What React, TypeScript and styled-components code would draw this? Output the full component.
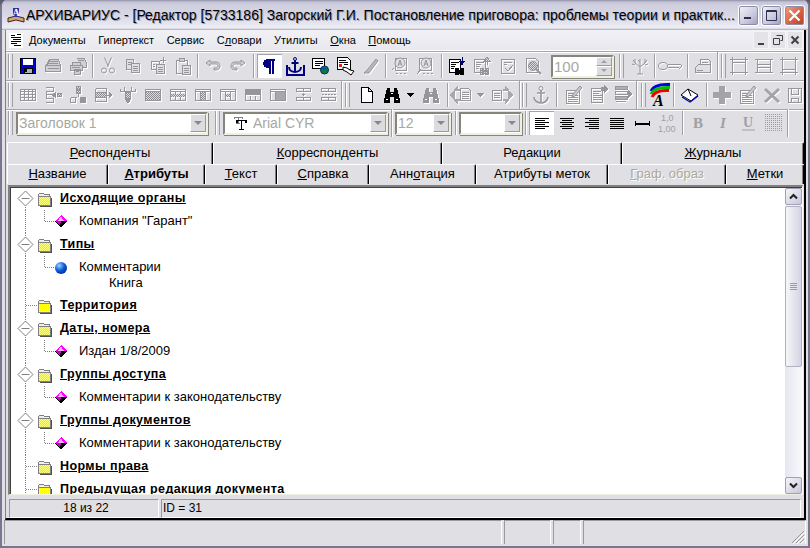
import * as React from 'react';
import styled, { createGlobalStyle } from 'styled-components';

const GlobalStyle = createGlobalStyle`
  html, body { margin: 0; padding: 0; background: #5c5c70; }
  body { width: 810px; height: 548px; overflow: hidden; font-family: "Liberation Sans", Arial, sans-serif; }
`;

const Win = styled.div`
  width: 810px;
  height: 548px;
  box-sizing: border-box;
  display: flex;
  flex-direction: column;
  background: #e0dfe3;
  border-radius: 7px 7px 0 0;
  border: 2px solid #77778f;
  border-top: 0;
  overflow: hidden;
`;

const TitleBar = styled.div`
  height: 30px;
  flex: none;
  margin: 0 -2px;
  display: flex;
  align-items: center;
  padding: 0 5px 0 7px;
  background: linear-gradient(#8e8ea6 0, #c4c4d6 2px, #cfcfdf 5px, #d6d6e4 14px, #e6e6f0 24px, #eeeef6 28px, #a6a6bc 30px);
`;

const TitleText = styled.div`
  flex: 1;
  min-width: 0;
  margin-left: 1px;
  margin-top: -1px;
  font: 14px "Liberation Sans", sans-serif;
  color: #000;
  text-shadow: 1px 1px 0 #9a9ab0;
  white-space: nowrap;
`;

const CaptionBtn = styled.div<{ $close?: boolean }>`
  width: 21px;
  height: 21px;
  flex: none;
  margin-left: 2px;
  box-sizing: border-box;
  border: 1px solid #fff;
  border-radius: 3px;
  display: flex;
  align-items: center;
  justify-content: center;
  background: ${p =>
    p.$close
      ? 'linear-gradient(135deg, #eda08c, #d85c3c 60%, #b83c2c)'
      : 'linear-gradient(135deg, #f4f4fa, #c8c8dc 60%, #9c9cc0)'};
  box-shadow: 0 0 0 1px #8c8ca4 inset;
`;

const Child = styled.div`
  flex: none;
  height: 490px;
  margin: 0 0 0 3px;
  box-sizing: border-box;
  width: 801px;
  border-left: 1px solid #808080;
  border-right: 2px solid #000;
  border-bottom: 2px solid #000;
  display: flex;
  flex-direction: column;
`;

const MenuBar = styled.div`
  height: 20px;
  flex: none;
  display: flex;
  align-items: center;
  background: linear-gradient(#f1f1f5, #e8e8ee);
  padding-left: 3px;
  font-size: 11px;
  color: #000;
  border-bottom: 1px solid #ffffff;
`;

const MenuItem = styled.span`
  margin-left: 12.5px;
  white-space: nowrap;
  &:first-of-type { margin-left: 6px; }
`;

const MdiButtons = styled.div`
  margin-left: auto;
  display: flex;
  margin-right: 1px;
`;

const MdiBtn = styled.div`
  width: 16px;
  height: 18px;
  margin-left: 1px;
  background: #e4e4e8;
  border: 1px solid #f4f4f6;
  box-sizing: border-box;
  display: flex;
  align-items: center;
  justify-content: center;
`;

const ToolRow = styled.div<{ $h: number }>`
  height: ${p => p.$h}px;
  box-sizing: border-box;
  flex: none;
  display: flex;
  align-items: center;
  padding-left: 2px;
  border-top: 1px solid #a4a4a8;
  box-shadow: inset 0 1px 0 #fff;
`;

const Grip = styled.div<{ $ml?: number; $mr?: number }>`
  width: 5px;
  height: 24px;
  flex: none;
  margin-left: ${p => p.$ml ?? 0}px;
  margin-right: ${p => p.$mr ?? 2}px;
  box-sizing: border-box;
  border-left: 1px solid #a0a0a4;
  border-right: 1px solid #a0a0a4;
  box-shadow: inset 1px 0 0 #fff;
`;

const Sep = styled.div<{ $w?: number }>`
  width: ${p => p.$w ?? 5}px;
  height: 24px;
  flex: none;
  display: flex;
  justify-content: center;
  &::after {
    content: '';
    width: 1px;
    background: #a0a0a4;
    box-shadow: 1px 0 0 #fff;
  }
`;

const BandEnd = styled(Sep)`
  height: 28px;
`;

const Tool = styled.div<{ $w?: number; $on?: boolean; $off?: boolean }>`
  width: ${p => p.$w ?? 25}px;
  height: 24px;
  flex: none;
  display: flex;
  align-items: center;
  justify-content: center;
  color: ${p => (p.$off ? '#96969a' : '#000')};
  background: ${p => (p.$on ? '#fff' : 'transparent')};
  box-shadow: ${p => (p.$on ? 'inset 1px 1px 0 #a4a4a8' : 'none')};
  svg { overflow: visible; filter: ${p => (p.$off ? 'drop-shadow(1px 1px 0 #fff)' : 'none')}; }
`;

const Combo = styled.div<{ $w: number; $ml?: number }>`
  width: ${p => p.$w}px;
  height: 23px;
  flex: none;
  margin-left: ${p => p.$ml ?? 0}px;
  box-sizing: border-box;
  background: #fff;
  border: 2px solid;
  border-color: #85857c #f1efe2 #f1efe2 #85857c;
  box-shadow: 1px 1px 0 #85857c;
  display: flex;
  align-items: center;
  color: #a8a8a0;
  font-size: 14px;
  padding-left: 1px;
  white-space: nowrap;
`;

const ComboText = styled.span`
  flex: 1;
  overflow: hidden;
`;

const ComboArrow = styled.div`
  width: 16px;
  height: 18px;
  flex: none;
  background: #dcdce0;
  border: 1px solid;
  border-color: #fff #9a9a9e #9a9a9e #fff;
  box-sizing: border-box;
  position: relative;
  &::after {
    content: '';
    position: absolute;
    left: 3px;
    top: 6px;
    border: 4px solid transparent;
    border-top: 4px solid #88888c;
    border-bottom: 0;
  }
`;

const Spin = styled(Combo)`
  font-size: 15px;
`;

const SpinButtons = styled.div`
  width: 16px;
  height: 19px;
  display: flex;
  flex-direction: column;
  flex: none;
`;

const SpinBtn = styled.div<{ $up?: boolean }>`
  flex: 1;
  background: #dcdce0;
  border: 1px solid;
  border-color: #fff #9a9a9e #9a9a9e #fff;
  display: flex;
  align-items: center;
  justify-content: center;
  &::after {
    content: '';
    border: 3px solid transparent;
    ${p => (p.$up ? 'border-bottom: 3px solid #a0a0a4; border-top: 0;' : 'border-top: 3px solid #a0a0a4; border-bottom: 0;')}
  }
`;

const TabRow = styled.div<{ $h: number; $mt?: number }>`
  display: flex;
  height: ${p => p.$h}px;
  flex: none;
  margin-top: ${p => p.$mt ?? 0}px;
  padding-left: 1px;
`;

const Tab = styled.div<{ $w: number; $active?: boolean; $off?: boolean }>`
  width: ${p => p.$w}px;
  flex: none;
  box-sizing: border-box;
  display: flex;
  align-items: center;
  justify-content: center;
  padding-bottom: 2px;
  background: #e0dfe3;
  border-top: 1px solid #fff;
  border-left: 1px solid #fff;
  border-right: 1px solid #000;
  box-shadow: inset -1px 0 0 #808080;
  border-radius: 2px 2px 0 0;
  font-size: 13px;
  font-weight: ${p => (p.$active ? 700 : 400)};
  color: ${p => (p.$off ? '#aca899' : '#000')};
  text-shadow: ${p => (p.$off ? '1px 1px 0 #fff' : 'none')};
  white-space: nowrap;
`;

const Panel = styled.div`
  flex: none;
  height: 310px;
  margin: 1px 1px 0 2px;
  box-sizing: border-box;
  border-top: 2px solid #808080;
  border-left: 2px solid #808080;
  box-shadow: inset 1px 1px 0 #404040;
  border-right: 1px solid #fff;
  border-bottom: 1px solid #f1efe2;
  background: #fff;
  display: flex;
`;

const TreePane = styled.div`
  flex: 1;
  min-width: 0;
  overflow: hidden;
  font-size: 13px;
  color: #000;
`;

const Row = styled.div<{ $h?: number }>`
  height: ${p => p.$h ?? 23}px;
  display: flex;
  align-items: flex-start;
`;

const Caption = styled.div`
  font-size: 12.5px;
  font-weight: 700;
  text-decoration: underline;
  line-height: 23px;
  margin-left: 8px;
  letter-spacing: 0.4px;
  white-space: nowrap;
`;

const Leaf = styled.div`
  margin-left: 11px;
  padding-top: 3px;
  line-height: 16px;
  white-space: nowrap;
`;

const SubLeaf = styled.div`
  margin-left: 30px;
`;

const Scrollbar = styled.div`
  width: 17px;
  flex: none;
  margin-top: 1px;
  display: flex;
  flex-direction: column;
  background: #f3f3f8;
`;

const ScrollBtn = styled.div`
  height: 17px;
  flex: none;
  box-sizing: border-box;
  border: 1px solid #a0a0b4;
  border-radius: 2px;
  background: linear-gradient(135deg, #f4f4f8, #c8c8dc);
  display: flex;
  align-items: center;
  justify-content: center;
`;

const Thumb = styled.div`
  height: 161px;
  flex: none;
  margin-top: 1px;
  box-sizing: border-box;
  border: 1px solid #b0b0c0;
  border-radius: 2px;
  background: linear-gradient(90deg, #f6f6fa, #d4d4e2);
  display: flex;
  flex-direction: column;
  align-items: center;
  justify-content: center;
  gap: 1px;
`;

const ThumbLine = styled.div`
  width: 7px;
  height: 1px;
  background: #9a9aa8;
`;

const Track = styled.div`
  flex: 1;
  background: linear-gradient(90deg, #e6e6f0, #f8f8fc);
`;

const InfoRow = styled.div`
  flex: 1;
  display: flex;
  margin: 4px 1px 1px 3px;
  font-size: 12px;
  line-height: 17px;
`;

const InfoCell = styled.div<{ $w?: number; $center?: boolean }>`
  ${p => (p.$w ? `width: ${p.$w}px; flex: none;` : 'flex: 1;')}
  box-sizing: border-box;
  margin-right: 2px;
  border-top: 1px solid #9a9a9e;
  border-left: 1px solid #9a9a9e;
  border-right: 1px solid #fff;
  border-bottom: 1px solid #fff;
  text-align: ${p => (p.$center ? 'center' : 'left')};
  padding-left: ${p => (p.$center ? 4 : 1)}px;
`;

const StatusBar = styled.div`
  flex: none;
  height: 24px;
  display: flex;
  margin: 0 0 1px 2px;
`;

const StatusCell = styled.div<{ $w?: number }>`
  ${p => (p.$w ? `width: ${p.$w}px; flex: none;` : 'flex: 1;')}
  box-sizing: border-box;
  margin-right: 2px;
  border-top: 1px solid #9a9a9e;
  border-left: 1px solid #9a9a9e;
  border-right: 1px solid #fff;
  position: relative;
`;

const SizeGrip = styled.svg`
  position: absolute;
  right: 0;
  bottom: 0;
`;

const SharedDefs = styled.svg`
  display: block;
  width: 0;
  height: 0;
  flex: none;
`;

// ---- drawings ----
const S = (p: { children: React.ReactNode; w?: number; h?: number }) => (
  <svg width={p.w ?? 20} height={p.h ?? 20} viewBox={`0 0 ${p.w ?? 20} ${p.h ?? 20}`} fill="none" stroke="currentColor" shapeRendering="crispEdges">
    {p.children}
  </svg>
);

const G = 'url(#dith)';

const gridBox = (fill: React.ReactNode) => (
  <S>
    <rect x="2.500" y="4.500" width="15" height="11" />
    <path d="M2.500 6.500h15" />
    {fill}
  </S>
);

const icons: Record<string, React.ReactNode> = {
  save: (
    <S>
      <path d="M2.500 2.500h15v15h-15z" fill="#0000d0" stroke="#000" />
      <rect x="5" y="3" width="10" height="6" fill="#fff" stroke="none" />
      <rect x="6" y="12" width="8" height="5" fill="#b0b0b0" stroke="#000" />
      <rect x="7" y="13" width="2" height="3" fill="#000" stroke="none" />
    </S>
  ),
  print: (
    <S>
      <path d="M6.500 3.500h9l2 6h-14zM2.500 9.500h15v6h-15z" fill="#d0d0d4" />
      <path d="M5.500 5.500h9M5 7.500h10M4.500 12.500h11" />
    </S>
  ),
  fax: (
    <S>
      <path d="M8.500 2.500h8l2 5v4h-4M4.500 6.500h8v3h-8zM2.500 9.500h12v5h-12zM6.500 13.500h6v5h-6z" fill="#d0d0d4" />
      <path d="M10 4.500h6M4 11.500h8M8 15.500h3" />
    </S>
  ),
  cut: (
    <S>
      <path d="M6.500 1.500l4 9M13.500 1.500l-4 9" shapeRendering="auto" />
      <circle cx="6" cy="14.500" r="2.500" shapeRendering="auto" />
      <circle cx="14" cy="14.500" r="2.500" shapeRendering="auto" />
    </S>
  ),
  copy: (
    <S>
      <path d="M3.500 3.500h7v10h-7z" fill="#e0dfe3" />
      <path d="M8.500 7.500h8v9h-8z" fill="#e0dfe3" />
      <path d="M5 6.500h4M5 8.500h3M10 10.500h5M10 12.500h5M10 14.500h5" />
    </S>
  ),
  pasteAdd: (
    <S>
      <path d="M3.500 5.500h8v8h-8z" />
      <path d="M8.500 8.500h8v9h-8z" fill="#e0dfe3" />
      <path d="M15 1v6M12 4h6M5 8.500h2M5 10.500h2M10 11.500h5M10 13.500h5M10 15.500h5" />
    </S>
  ),
  paste: (
    <S>
      <path d="M3.500 4.500h11v13h-11z" />
      <path d="M6.500 2.500h5v3h-5z" fill="#d0d0d4" />
      <path d="M9.500 9.500h8v9h-8z" fill="#e0dfe3" />
      <path d="M11 12.500h5M11 14.500h5M11 16.500h5" />
    </S>
  ),
  undo: (
    <S>
      <path d="M3 7l4-3v2h6c3 0 4 2 4 4s-1 4-4 4h-2v-2h2c1 0 2-1 2-2s-1-2-2-2H7v2z" shapeRendering="auto" fill="#d0d0d4" />
    </S>
  ),
  redo: (
    <S>
      <path d="M17 7l-4-3v2H7c-3 0-4 2-4 4s1 4 4 4h2v-2H7c-1 0-2-1-2-2s1-2 2-2h6v2z" shapeRendering="auto" fill="#d0d0d4" />
    </S>
  ),
  pilcrow: (
    <S>
      <path d="M15 3H8C5 3 3 5 3 7.500S5 12 8 12h1v6h2V5h1v13h2V5h1z" fill="#000080" stroke="none" />
    </S>
  ),
  anchorBlue: (
    <S>
      <path d="M1.500 9v9.500h17V9" stroke="#000080" strokeWidth="2" />
      <path d="M10 4v12M6.500 7h7M4 11c0 4 4 5 6 5s6-1 6-5" stroke="#000080" strokeWidth="2" shapeRendering="auto" />
      <circle cx="10" cy="3" r="1.500" stroke="#000080" shapeRendering="auto" />
    </S>
  ),
  docGlobe: (
    <S>
      <path d="M2.500 2.500h12v10h-12z" fill="#fff" stroke="#000" />
      <path d="M5 5.500h8M5 7.500h8M5 9.500h5" stroke="#000" />
      <circle cx="14.500" cy="14" r="4" fill="#0a7a40" stroke="#003060" shapeRendering="auto" />
      <path d="M12 12h4v2h-3z" fill="#2040c0" stroke="none" />
    </S>
  ),
  docHand: (
    <S>
      <path d="M2.500 1.500h10l3 3v9h-13z" fill="#fff" stroke="#000" />
      <path d="M4 4.500h7M4 6.500h9M9 8.500h4" stroke="#000" />
      <rect x="4" y="8" width="3" height="3" fill="#e02020" stroke="none" />
      <path d="M8 11l4 1 3 2 4 1-3 4-4-3-4-2z" fill="#fff" stroke="#000" shapeRendering="auto" />
    </S>
  ),
  pen: (
    <S>
      <path d="M3 17h5l9-12-2-2-8 10z" fill="#b8b8bc" shapeRendering="auto" />
    </S>
  ),
  docA: (
    <S>
      <path d="M5.500 2.500h11v12h-11z" />
      <circle cx="10" cy="7" r="5" fill="#e0dfe3" shapeRendering="auto" />
      <path d="M8 10l2-6 2 6M8.500 8h3" shapeRendering="auto" />
      <path d="M6 17h2M10 17h2M14 17h2M4 12l-2 2" />
    </S>
  ),
  docAm: (
    <S>
      <path d="M4.500 2.500h12v12h-12z" />
      <circle cx="11" cy="7" r="5" fill="#e0dfe3" shapeRendering="auto" />
      <path d="M9 10l2-6 2 6M9.500 8h3" shapeRendering="auto" />
      <path d="M2 18l4-5M8 17h2M12 17h2M16 17h2" />
    </S>
  ),
  findDown: (
    <S>
      <path d="M1.500 3.500h11v13h-11z" fill="#fff" stroke="#000" />
      <path d="M3 6.500h8M3 8.500h5M3 10.500h4M3 12.500h3" stroke="#000" />
      <path d="M14 1v5M11.500 5.500h5l-2.500 3z" fill="#000080" stroke="#000080" />
      <path d="M7.500 12.500h3v6h-3zM12.500 12.500h3v6h-3zM9 14h5v3H9z" fill="#000" stroke="#000" />
    </S>
  ),
  findUp: (
    <S>
      <path d="M1.500 3.500h11v13h-11z" />
      <path d="M3 6.500h8M3 8.500h5M3 10.500h4M3 12.500h3" />
      <path d="M14 9V5M11 5l3-4 3 4z" fill={G} />
      <path d="M7.500 12.500h3v6h-3zM12.500 12.500h3v6h-3zM9 14h5v3H9z" fill={G} />
    </S>
  ),
  docCheck: (
    <S>
      <path d="M3.500 3.500h13v14h-13z" />
      <path d="M6 6.500h8M6 8.500h3M7 12l3 3 5-6" />
    </S>
  ),
  docMag: (
    <S>
      <path d="M3.500 2.500h9l3 3v11h-12z" />
      <circle cx="10" cy="10" r="4.500" fill={G} shapeRendering="auto" />
      <path d="M13 13l5 5" strokeWidth="2" shapeRendering="auto" />
    </S>
  ),
  tree: (
    <S>
      <path d="M10 18V8M10 11L5 7M10 11l5-4M5 7L3 4M5 7V3M15 7l2-3M15 7V3M10 8V3M10 6L8 4M7 18h6M2 8l3 1M18 8l-3 1" shapeRendering="auto" />
    </S>
  ),
  key: (
    <S w={28} h={20}>
      <ellipse cx="6" cy="10" rx="4.500" ry="3.500" shapeRendering="auto" />
      <path d="M10.500 8.500h13l1.500 1.500-2 2h-1l-1-1-1 1-1-1-1 1-1-1h-6" />
    </S>
  ),
  folderPrint: (
    <S>
      <path d="M7.500 3.500h8l2 2v6h-10z" />
      <path d="M2.500 11.500l3-3h12v8h-15z" fill="#e0dfe3" />
      <path d="M9 6.500h6M4 14.500h6" />
    </S>
  ),
  boxTop: (
    <S>
      <path d="M1 3.500h18M1 16.500h18M3.500 1v18M16.500 1v18M4 6.500h12" />
    </S>
  ),
  boxMid: (
    <S>
      <path d="M1 3.500h18M1 16.500h18M3.500 3v14M16.500 3v14M4 8.500h12M4 11.500h12" />
    </S>
  ),
  boxBot: (
    <S>
      <path d="M1 3.500h18M1 16.500h18M3.500 1v18M16.500 1v18M4 13.500h12" />
    </S>
  ),
  table: gridBox(<path d="M2.500 9.500h15M2.500 12.500h15M6.500 4v12M10.500 4v12M14.500 4v12" />),
  colIn: (
    <S>
      <path d="M3 2.500h7v4H3M3 13.500h7v4H3M3.500 6.500v7M3 9.500h7" />
      <path d="M9 10h3M12 8l-3 2 3 2zM14.500 8.500h4v3h-4z" fill={G} />
    </S>
  ),
  rowIn: (
    <S>
      <path d="M8.500 1.500h4v3h-4zM8.500 5.500h4v3h-4z" fill={G} />
      <path d="M10.500 9v3M2.500 12.500h6M2.500 12.500v5h5v-5" />
      <rect x="12" y="12" width="6" height="6" fill="#96969a" stroke="none" />
    </S>
  ),
  colArrow: (
    <S>
      <path d="M2.500 3.500h11v4M2.500 3.500v4M2.500 16.500h11v-4M2.500 16.500v-4" />
      <rect x="2.500" y="7.500" width="11" height="5" fill={G} />
      <path d="M13 10h3M16 7l3 3-3 3z" fill="#96969a" />
    </S>
  ),
  rowArrow: (
    <S>
      <path d="M2.500 3.500v3h15v-3M6.500 2v5M13.500 2v5" />
      <rect x="7.500" y="7.500" width="5" height="6" fill={G} />
      <path d="M7 14h6l-3 4z" fill="#96969a" />
    </S>
  ),
  t1: gridBox(<rect x="3" y="7" width="14" height="8" fill={G} stroke="none" />),
  t2: gridBox(<><path d="M7.500 6v10M12.500 6v10" /><rect x="3" y="9" width="14" height="3" fill={G} stroke="none" /></>),
  t3: gridBox(<><path d="M7.500 6v10M12.500 6v10" /><rect x="8" y="7" width="4" height="8" fill={G} stroke="none" /></>),
  t4: gridBox(<><path d="M7.500 6v10M12.500 6v10" /><rect x="8" y="9" width="4" height="3" fill={G} stroke="none" /></>),
  t5: gridBox(<><rect x="3" y="5" width="14" height="5" fill="#96969a" stroke="none" /><path d="M7.500 11v4M12.500 11v4" /></>),
  t6: gridBox(<><rect x="8" y="7" width="9" height="8" fill="#a8a8ac" stroke="none" /><path d="M7.500 6v10" /></>),
  t7: (
    <S>
      <path d="M3.500 3.500h14v3h-14zM3.500 12.500h14v3h-14zM10 8v3M8.500 9.500h3M10.500 3v3M10.500 12v3" />
    </S>
  ),
  t8: (
    <S>
      <path d="M3.500 3.500h14v3h-14zM3.500 12.500h14v3h-14zM10.500 3v3M10.500 12v3" />
      <path d="M3.500 9.500h14" strokeDasharray="2 1" />
    </S>
  ),
  newDoc: (
    <S>
      <path d="M4.500 2.500h7l4 4v11h-11zM11.500 2.500v4h4" fill="#fff" stroke="#000" />
    </S>
  ),
  binoc: (
    <S>
      <path d="M5 3h3v4h4V3h3l3 12v3h-6v-6H8v6H2v-3z" fill="currentColor" stroke="none" />
      <path d="M4 14h2M14 14h2M9 8h2" stroke="#fff" />
    </S>
  ),
  caret: (
    <S w={8} h={20}>
      <path d="M0 8h8l-4 4z" fill="currentColor" stroke="none" />
    </S>
  ),
  back: (
    <S w={24} h={22}>
      <path d="M9 1L1 11l8 10v-4h2v-2H6V7h5V5H9z" fill="#a8a8ac" stroke="none" />
      <path d="M11.500 4.500h8l2 2v10h-10z" />
      <path d="M13 8.500h7M13 10.500h7M13 12.500h7M13 14.500h7" />
    </S>
  ),
  forward: (
    <S w={24} h={22}>
      <path d="M15 1l8 10-8 10v-4h-2v-2h5V7h-5V5h2z" fill="#a8a8ac" stroke="none" />
      <path d="M2.500 6.500h9v10h-9z" />
      <path d="M4 9.500h6M4 11.500h6M4 13.500h6" />
    </S>
  ),
  anchor: (
    <S>
      <circle cx="10" cy="3.500" r="2" shapeRendering="auto" />
      <path d="M10 5v12M6 8h8M3 12c0 4 4 6 7 6s7-2 7-6" strokeWidth="1.600" shapeRendering="auto" />
    </S>
  ),
  note: (
    <S>
      <path d="M3.500 5.500h13v13h-13z" />
      <path d="M5 8.500h8M5 10.500h10M5 12.500h10M5 14.500h10M5 16.500h10" />
      <path d="M10 9l7-8 2 2-7 8-3 1z" fill="#c8c8cc" shapeRendering="auto" />
    </S>
  ),
  noteArrow: (
    <S>
      <path d="M3.500 3.500h11v14h-11z" />
      <path d="M5 6.500h8M5 8.500h6M5 10.500h9M5 12.500h9M5 14.500h9" />
      <path d="M13 2h3V0l4 4-4 4V6h-3z" fill="#96969a" stroke="none" />
    </S>
  ),
  listArrow: (
    <S>
      <rect x="2.500" y="1.500" width="12" height="3" fill="#b0b0b4" />
      <rect x="2.500" y="6.500" width="12" height="3" />
      <rect x="2.500" y="11.500" width="12" height="3" fill="#b0b0b4" />
      <path d="M2.500 16.500h10" />
      <path d="M15 5l4 4-4 4z" fill="#96969a" stroke="none" />
    </S>
  ),
  colorA: (
    <svg width="22" height="24" viewBox="0 0 22 24" fill="none" shapeRendering="auto">
      <path d="M2 8C4 3 12 1 21 1.500" stroke="#0000e0" strokeWidth="3" />
      <path d="M2 11C4 6 12 4 21 4.500" stroke="#00c000" strokeWidth="3" />
      <path d="M3 14C5 9 12 7 20 7.500" stroke="#f00000" strokeWidth="3" />
      <text x="4" y="23" fontFamily="Liberation Serif, serif" fontStyle="italic" fontWeight="700" fontSize="16" fill="#000">A</text>
    </svg>
  ),
  book: (
    <svg width="20" height="20" viewBox="0 0 20 20" fill="none" shapeRendering="auto">
      <path d="M1 10l7-6 10 6-7 6z" fill="#fff" stroke="#000" />
      <path d="M2 12l8 5 8-6" stroke="#0000c0" strokeWidth="1.400" />
      <path d="M8 4l3 7" stroke="#000" />
    </svg>
  ),
  plus: (
    <S>
      <path d="M7 1h6v6h6v6h-6v6H7v-6H1V7h6z" fill="#a4a4a8" stroke="none" />
    </S>
  ),
  cross: (
    <S>
      <path d="M3 4l14 13M17 4L3 17" strokeWidth="3" shapeRendering="auto" stroke="#a4a4a8" />
    </S>
  ),
  disk: (
    <S>
      <path d="M3.500 3.500h13v14h-13z" />
      <path d="M6.500 4v5h7V4M6.500 17v-4h7v4" />
    </S>
  ),
  alignL: (
    <S>
      <path d="M3 5.500h14M3 7.500h10M3 9.500h14M3 11.500h10M3 13.500h14M3 15.500h10" />
    </S>
  ),
  alignC: (
    <S>
      <path d="M3 5.500h14M5 7.500h10M3 9.500h14M5 11.500h10M3 13.500h14M5 15.500h10" />
    </S>
  ),
  alignR: (
    <S>
      <path d="M3 5.500h14M7 7.500h10M3 9.500h14M7 11.500h10M3 13.500h14M7 15.500h10" />
    </S>
  ),
  justify: (
    <S>
      <path d="M3 5.500h14M3 7.500h14M3 9.500h14M3 11.500h14M3 13.500h14M3 15.500h14" />
    </S>
  ),
  line: (
    <S>
      <path d="M3 8v5M17 8v5" stroke="#000" />
      <path d="M3 10.500h14" stroke="#000" strokeWidth="2" />
    </S>
  ),
  spacing: (
    <svg width="20" height="22" viewBox="0 0 20 22" shapeRendering="auto">
      <text x="4" y="9" fontFamily="Liberation Sans, sans-serif" fontSize="9" fill="#a0a0a4">1,0</text>
      <text x="1" y="20" fontFamily="Liberation Sans, sans-serif" fontSize="9" fill="#a0a0a4">1,00</text>
    </svg>
  ),
  bold: (
    <svg width="20" height="20" viewBox="0 0 20 20" shapeRendering="auto">
      <text x="4" y="15" fontFamily="Liberation Serif, serif" fontWeight="700" fontSize="15" fill="#a0a0a4">B</text>
    </svg>
  ),
  italic: (
    <svg width="20" height="20" viewBox="0 0 20 20" shapeRendering="auto">
      <text x="6" y="15" fontFamily="Liberation Serif, serif" fontWeight="700" fontStyle="italic" fontSize="15" fill="#a0a0a4">I</text>
    </svg>
  ),
  underline: (
    <svg width="20" height="20" viewBox="0 0 20 20" shapeRendering="auto">
      <text x="4" y="14" fontFamily="Liberation Serif, serif" fontWeight="700" fontSize="14" fill="#a0a0a4">U</text>
      <path d="M3 17h13" stroke="#a0a0a4" />
    </svg>
  ),
  dots: (
    <svg width="18" height="18" viewBox="0 0 18 18">
      <defs>
        <pattern id="dotfill" width="2" height="2" patternUnits="userSpaceOnUse">
          <rect width="1" height="1" fill="#9c9ca0" />
        </pattern>
      </defs>
      <rect width="18" height="18" fill="url(#dotfill)" />
    </svg>
  ),
  tT: (
    <S w={14} h={16}>
      <path d="M1 2.500h8M1 2v2M9 2v2M5 2v6M3 8.500h4" stroke="#808084" />
      <path d="M4 5.500h9M4 5v3M13 5v3M8.500 5v9M6 14.500h5" stroke="#000" strokeWidth="1.300" />
    </S>
  ),
};

type Item = { i: string; w?: number; on?: boolean; off?: boolean };

const Tools = ({ items }: { items: Item[] }) => (
  <>
    {items.map((t, n) => (
      <Tool key={n} $w={t.w} $on={t.on} $off={t.off}>
        {icons[t.i]}
      </Tool>
    ))}
  </>
);

const off = (...names: string[]): Item[] => names.map(i => ({ i, off: true }));

const Folder = ({ bright }: { bright?: boolean }) => (
  <svg width="15" height="15" viewBox="0 0 15 15" shapeRendering="crispEdges" style={{ flex: 'none', marginTop: 5 }}>
    <path d="M1.500 2.500l1-1h4l1 1h5v2h-11z" fill="#f0f0e4" stroke="#808080" />
    <rect x="1.500" y="4.500" width="12" height="8.500" fill={bright ? 'url(#foldBright)' : 'url(#foldPale)'} stroke="#808080" />
    <path d="M14.500 6v8h-12" stroke="#505050" fill="none" />
  </svg>
);

const dotted = { stroke: '#808080', strokeDasharray: '1 1', shapeRendering: 'crispEdges' as const };

const HeadGutter = ({ open, first }: { open?: boolean; first?: boolean }) => (
  <svg width="27" height="23" viewBox="0 0 27 23" fill="none" style={{ flex: 'none' }}>
    {open ? (
      <>
        {!first && <path d="M15.500 0V5" {...dotted} />}
        <path d="M15.500 18V23" {...dotted} />
        <path d="M15.500 4l7.500 7.500-7.500 7.500L8 11.500zM11.500 11.500h8" stroke="#808080" fill="#fff" />
      </>
    ) : (
      <path d="M15.500 0V23M16 11.500h11" {...dotted} />
    )}
  </svg>
);

const LeafGutter = ({ h = 23 }: { h?: number }) => (
  <svg width="44" height={h} viewBox={`0 0 44 ${h}`} fill="none" style={{ flex: 'none' }}>
    <path d={`M15.500 0V${h}`} {...dotted} />
    <path d="M34.500 0V11.500H44" {...dotted} />
  </svg>
);

const Gem = () => (
  <svg width="14" height="14" viewBox="0 0 14 14" style={{ flex: 'none', marginTop: 5 }} shapeRendering="crispEdges">
    <path d="M1 6l6-6 6 6z" fill="#ff00ff" />
    <path d="M7 1L4 6h6z" fill="#ffb0ff" />
    <path d="M1 6h12l-6 7z" fill="#000" />
    <path d="M1 6h6v1l-1 3z" fill="#d000d0" />
  </svg>
);

const Ball = () => (
  <svg width="14" height="14" viewBox="0 0 14 14" style={{ flex: 'none', marginTop: 5 }}>
    <defs>
      <radialGradient id="ball" cx="0.35" cy="0.3" r="0.8">
        <stop offset="0" stopColor="#a0d0ff" />
        <stop offset="0.5" stopColor="#1060e0" />
        <stop offset="1" stopColor="#002090" />
      </radialGradient>
    </defs>
    <circle cx="7" cy="7" r="6" fill="url(#ball)" />
  </svg>
);

const Head = ({ text, open, bright, first }: { text: string; open?: boolean; bright?: boolean; first?: boolean }) => (
  <Row>
    <HeadGutter open={open} first={first} />
    <Folder bright={bright} />
    <Caption>{text}</Caption>
  </Row>
);

const GemLeaf = ({ text }: { text: string }) => (
  <Row>
    <LeafGutter />
    <Gem />
    <Leaf>{text}</Leaf>
  </Row>
);

export default function App() {
  return (
    <>
      <GlobalStyle />
      <Win>
        <SharedDefs>
          <defs>
            <pattern id="dith" width="2" height="2" patternUnits="userSpaceOnUse">
              <rect width="2" height="2" fill="#dcdce0" />
              <rect width="1" height="1" fill="#8c8c90" />
              <rect x="1" y="1" width="1" height="1" fill="#8c8c90" />
            </pattern>
            <pattern id="foldPale" width="2" height="2" patternUnits="userSpaceOnUse">
              <rect width="2" height="2" fill="#ffff80" />
              <rect width="1" height="1" fill="#d4d4c4" />
              <rect x="1" y="1" width="1" height="1" fill="#d4d4c4" />
            </pattern>
            <pattern id="foldBright" width="2" height="2" patternUnits="userSpaceOnUse">
              <rect width="2" height="2" fill="#ffff00" />
              <rect width="1" height="1" fill="#ffff80" />
            </pattern>
          </defs>
        </SharedDefs>
        <TitleBar>
          <svg width="18" height="18" viewBox="0 0 18 18" shapeRendering="auto" style={{ flex: 'none' }}>
            <path d="M1 12l8-2 8 2v4l-8-2-8 2z" fill="#c8a878" stroke="#502010" />
            <path d="M6 2h6v9H6z" fill="#3030a0" />
            <text x="5.500" y="10" fontFamily="Liberation Serif, serif" fontWeight="700" fontSize="10" fill="#fff">A</text>
          </svg>
          <TitleText>АРХИВАРИУС - [Редактор [5733186] Загорский Г.И. Постановление приговора: проблемы теории и практик...</TitleText>
          <CaptionBtn>
            <svg width="9" height="9" viewBox="0 0 9 9"><path d="M0 6h7v2H0z" fill="#303050" /></svg>
          </CaptionBtn>
          <CaptionBtn>
            <svg width="13" height="13" viewBox="0 0 13 13" fill="none"><path d="M1.500 1.500h10v10h-10zM1.500 2.500h10" stroke="#303050" /></svg>
          </CaptionBtn>
          <CaptionBtn $close>
            <svg width="13" height="13" viewBox="0 0 13 13"><path d="M1.500 1.500l10 10M11.500 1.500l-10 10" stroke="#fff" strokeWidth="2.200" /></svg>
          </CaptionBtn>
        </TitleBar>
        <Child>
          <MenuBar>
            <svg width="14" height="15" viewBox="0 0 14 15" shapeRendering="crispEdges" style={{ flex: 'none' }}>
              <rect width="14" height="15" fill="#fff" />
              <path d="M2 2.500h4M8 1.500h4M2 4.500h10M4 6.500h8M2 8.500h10M2 10.500h6M5 12.500h7" stroke="#000" />
            </svg>
            <MenuItem><u>Д</u>окументы</MenuItem>
            <MenuItem>Гипертекст</MenuItem>
            <MenuItem>Сервис</MenuItem>
            <MenuItem>С<u>л</u>овари</MenuItem>
            <MenuItem>Утилиты</MenuItem>
            <MenuItem><u>О</u>кна</MenuItem>
            <MenuItem><u>П</u>омощь</MenuItem>
            <MdiButtons>
              <MdiBtn><svg width="10" height="10" viewBox="0 0 10 10"><path d="M2 8h6v2H2z" fill="#404040" /></svg></MdiBtn>
              <MdiBtn><svg width="10" height="10" viewBox="0 0 10 10" fill="none"><path d="M3.500 .5h6v5h-2M.5 3.500h6v6h-6z" stroke="#404040" /></svg></MdiBtn>
              <MdiBtn><svg width="10" height="10" viewBox="0 0 10 10"><path d="M1.500 1.500l7 7M8.500 1.500l-7 7" stroke="#404040" strokeWidth="2" /></svg></MdiBtn>
            </MdiButtons>
          </MenuBar>

          <ToolRow $h={29}>
            <Grip />
            <Tools items={[{ i: 'save' }, ...off('print', 'fax')]} />
            <Sep />
            <Tools items={off('cut', 'copy', 'pasteAdd', 'paste')} />
            <Sep />
            <Tools items={off('undo', 'redo')} />
            <Sep $w={7} />
            <Tools items={[{ i: 'pilcrow', on: true }, { i: 'anchorBlue' }, { i: 'docGlobe' }, { i: 'docHand' }, { i: 'pen', off: true, w: 27 }]} />
            <Sep $w={3} />
            <Tools items={off('docA', 'docAm')} />
            <Sep $w={8} />
            <Tools items={[{ i: 'findDown' }, ...off('findUp', 'docCheck', 'docMag')]} />
            <Spin $w={63} $ml={6}>
              <ComboText>100</ComboText>
              <SpinButtons><SpinBtn $up /><SpinBtn /></SpinButtons>
            </Spin>
            <Grip $ml={5} $mr={3} />
            <Tools items={off('tree')} />
            <Sep $w={5} />
            <Tools items={[{ i: 'key', off: true, w: 28 }]} />
            <Sep $w={5} />
            <Tools items={off('folderPrint')} />
            <BandEnd $w={4} />
            <Grip $ml={2} $mr={0} />
            <Tools items={off('boxTop', 'boxMid', 'boxBot')} />
          </ToolRow>

          <ToolRow $h={29}>
            <Grip />
            <Tools items={off('table', 'colIn', 'rowIn', 'colArrow', 'rowArrow', 't1', 't2', 't3', 't4', 't5', 't6', 't7', 't8')} />
            <BandEnd $w={3} />
            <Grip $ml={2} $mr={4} />
            <Tools items={[{ i: 'newDoc' }, { i: 'binoc' }, { i: 'caret', w: 11 }, { i: 'binoc', off: true, w: 31 }]} />
            <Sep $w={2} />
            <Tools items={[{ i: 'back', off: true, w: 26 }, { i: 'caret', off: true, w: 12 }, { i: 'forward', off: true, w: 31 }]} />
            <BandEnd $w={4} />
            <Grip $ml={1} $mr={1} />
            <Tools items={off('anchor')} />
            <Sep $w={7} />
            <Tools items={off('note', 'noteArrow', 'listArrow')} />
            <BandEnd $w={3} />
            <Grip $ml={3} $mr={1} />
            <Tools items={[{ i: 'colorA' }]} />
            <Sep $w={3} />
            <Tools items={[{ i: 'book', w: 29 }]} />
            <Sep $w={5} />
            <Tools items={[{ i: 'plus', off: true }, { i: 'note', off: true }, { i: 'cross', off: true }, { i: 'disk', off: true, w: 21 }]} />
          </ToolRow>

          <ToolRow $h={27}>
            <Grip />
            <Combo $w={192} $ml={1}>
              <ComboText>Заголовок 1</ComboText>
              <ComboArrow />
            </Combo>
            <Grip $ml={7} $mr={3} />
            <Combo $w={165}>
              <Tool $w={27}>{icons.tT}</Tool>
              <ComboText>Arial CYR</ComboText>
              <ComboArrow />
            </Combo>
            <BandEnd $w={7} />
            <Combo $w={56}>
              <ComboText>12</ComboText>
              <ComboArrow />
            </Combo>
            <Sep $w={8} />
            <Combo $w={63}>
              <ComboText />
              <ComboArrow />
            </Combo>
            <Sep $w={7} />
            <Tools items={[{ i: 'alignL', on: true }, { i: 'alignC' }, { i: 'alignR' }, { i: 'justify' }, { i: 'line' }, { i: 'spacing' }]} />
            <Sep $w={7} />
            <Tools items={[{ i: 'bold' }, { i: 'italic' }, { i: 'underline' }, { i: 'dots' }]} />
            <BandEnd $w={3} />
          </ToolRow>

          <TabRow $h={22} $mt={6}>
            <Tab $w={206}><span><u>Р</u>еспонденты</span></Tab>
            <Tab $w={229}><span><u>К</u>орреспонденты</span></Tab>
            <Tab $w={180}><span>Ре<u>д</u>акции</span></Tab>
            <Tab $w={182}><span><u>Ж</u>урналы</span></Tab>
          </TabRow>
          <TabRow $h={20}>
            <Tab $w={101}><span><u>Н</u>азвание</span></Tab>
            <Tab $w={97} $active><span><u>А</u>трибуты</span></Tab>
            <Tab $w={72}><span><u>Т</u>екст</span></Tab>
            <Tab $w={92}><span><u>С</u>правка</span></Tab>
            <Tab $w={107}><span>Анн<u>о</u>тация</span></Tab>
            <Tab $w={132}><span>Атрибуты меток</span></Tab>
            <Tab $w={118} $off><span><u>Г</u>раф. образ</span></Tab>
            <Tab $w={78}><span><u>М</u>етки</span></Tab>
          </TabRow>

          <Panel>
            <TreePane>
              <Head text="Исходящие органы" open first />
              <GemLeaf text={'Компания "Гарант"'} />
              <Head text="Типы" open />
              <Row $h={38}>
                <LeafGutter h={38} />
                <Ball />
                <Leaf>
                  Комментарии
                  <SubLeaf>Книга</SubLeaf>
                </Leaf>
              </Row>
              <Head text="Территория" bright />
              <Head text="Даты, номера" open />
              <GemLeaf text="Издан 1/8/2009" />
              <Head text="Группы доступа" open />
              <GemLeaf text="Комментарии к законодательству" />
              <Head text="Группы документов" open />
              <GemLeaf text="Комментарии к законодательству" />
              <Head text="Нормы права" />
              <Head text="Предыдущая редакция документа" bright />
            </TreePane>
            <Scrollbar>
              <ScrollBtn>
                <svg width="9" height="7" viewBox="0 0 9 7" fill="none"><path d="M1 5.500l3.500-3.500 3.500 3.500" stroke="#202020" strokeWidth="2" /></svg>
              </ScrollBtn>
              <Thumb>
                <ThumbLine /><ThumbLine /><ThumbLine /><ThumbLine />
              </Thumb>
              <Track />
              <ScrollBtn>
                <svg width="9" height="7" viewBox="0 0 9 7" fill="none"><path d="M1 1.500l3.500 3.500 3.500-3.500" stroke="#202020" strokeWidth="2" /></svg>
              </ScrollBtn>
            </Scrollbar>
          </Panel>

          <InfoRow>
            <InfoCell $w={150} $center>18 из 22</InfoCell>
            <InfoCell>ID = 31</InfoCell>
          </InfoRow>
        </Child>
        <StatusBar>
          <StatusCell $w={498} />
          <StatusCell $w={47} />
          <StatusCell $w={28} />
          <StatusCell>
            <SizeGrip width="14" height="14" viewBox="0 0 14 14" fill="none">
              <path d="M13 1L1 13M13 5L5 13M13 9L9 13" stroke="#9a9a9e" />
              <path d="M14 2L2 14M14 6L6 14M14 10L10 14" stroke="#fff" />
            </SizeGrip>
          </StatusCell>
        </StatusBar>
      </Win>
    </>
  );
}
